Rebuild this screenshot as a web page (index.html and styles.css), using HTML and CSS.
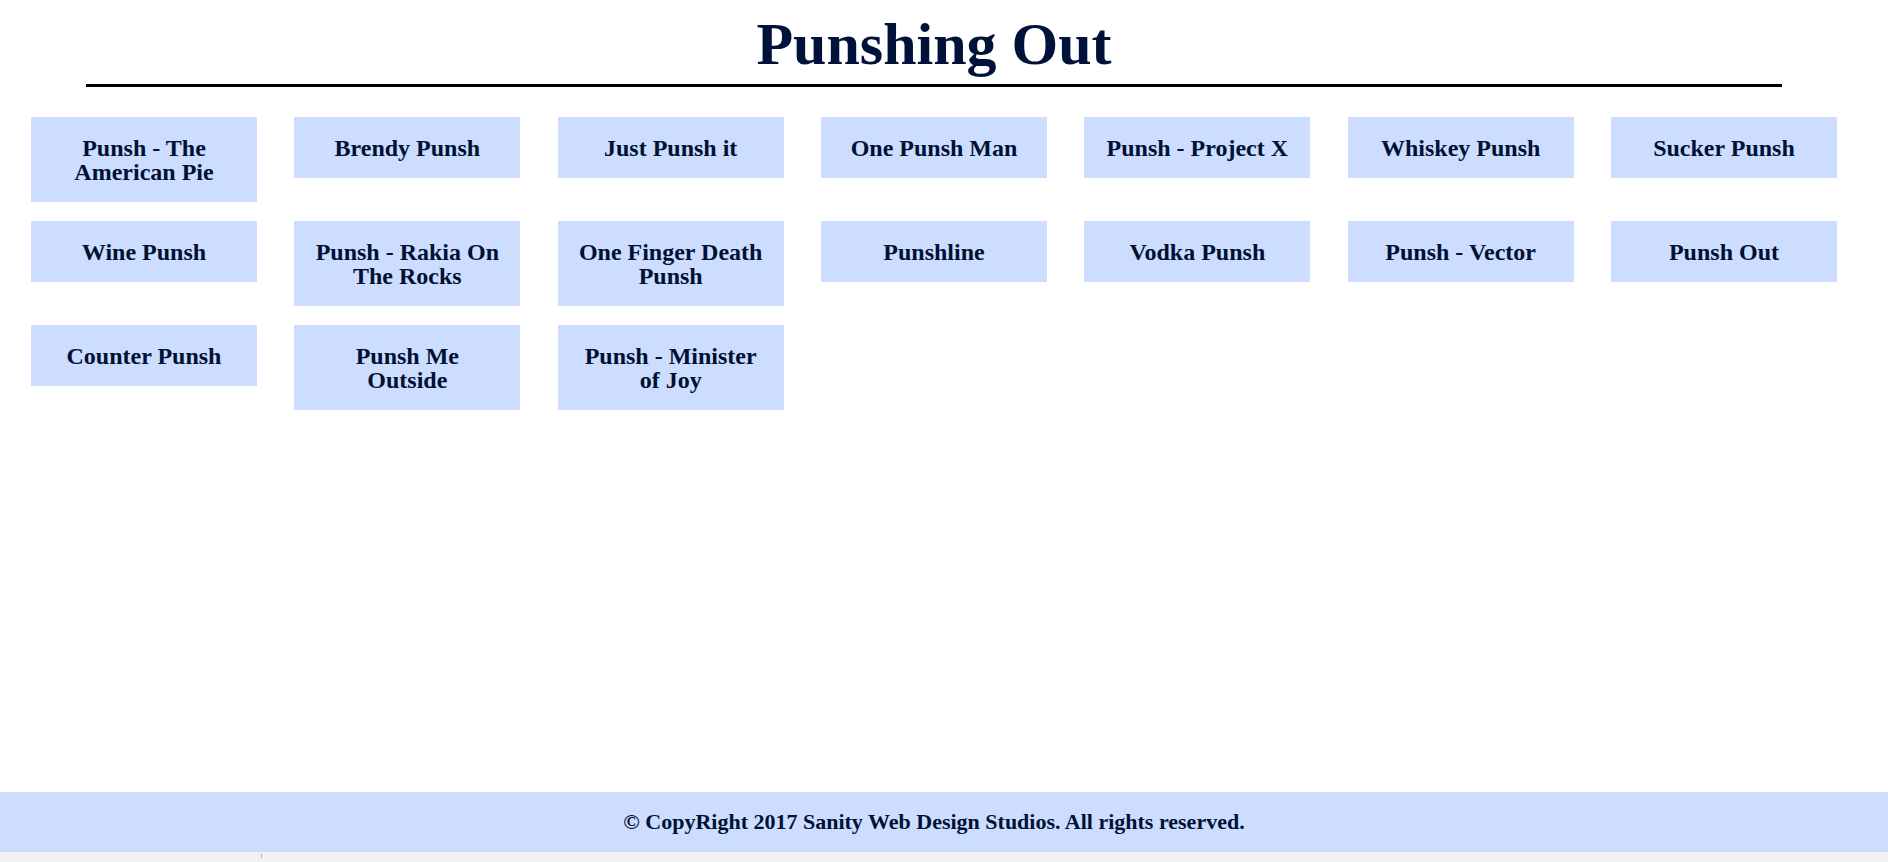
FILE: index.html
```html
<!DOCTYPE html>
<html lang="en">
<head>
<meta charset="utf-8">
<title>Punshing Out</title>
<link rel="stylesheet" href="styles.css">
</head>
<body>
<div class="page">
  <header class="header">
    <h1 class="title">Punshing Out</h1>
    <div class="rule"></div>
  </header>
  <main class="grid">
    <a class="card">Punsh - The American Pie</a>
    <a class="card">Brendy Punsh</a>
    <a class="card">Just Punsh it</a>
    <a class="card">One Punsh Man</a>
    <a class="card">Punsh - Project X</a>
    <a class="card">Whiskey Punsh</a>
    <a class="card">Sucker Punsh</a>
    <a class="card">Wine Punsh</a>
    <a class="card">Punsh - Rakia On The Rocks</a>
    <a class="card">One Finger Death Punsh</a>
    <a class="card">Punshline</a>
    <a class="card">Vodka Punsh</a>
    <a class="card">Punsh - Vector</a>
    <a class="card">Punsh Out</a>
    <a class="card">Counter Punsh</a>
    <a class="card">Punsh Me Outside</a>
    <a class="card">Punsh - Minister of Joy</a>
  </main>
</div>
<footer class="footer">
  <p class="footer-text">&copy; CopyRight 2017 Sanity Web Design Studios. All rights reserved.</p>
</footer>
<div class="statusbar"><span class="tick"></span></div>
</body>
</html>
```
FILE: styles.css
```css
html, body {
  margin: 0;
  padding: 0;
}
body {
  min-height: 862px;
  display: flex;
  flex-direction: column;
  background: #ffffff;
  font-family: "Liberation Serif", "Times New Roman", serif;
  color: #001133;
}
.page {
  flex: 1;
  width: 1868px;
}
.header {
  display: flex;
  flex-direction: column;
  align-items: center;
  padding-top: 14px;
}
.title {
  margin: 0;
  font-size: 60px;
  line-height: 60px;
  font-weight: bold;
  color: #00123a;
}
.rule {
  margin-top: 10px;
  width: 1696px;
  height: 3px;
  background: #000000;
}
.grid {
  display: flex;
  flex-wrap: wrap;
  align-items: flex-start;
  column-gap: 37.33px;
  row-gap: 19px;
  margin: 30px 0 0 31px;
  width: 1810px;
}
.card {
  box-sizing: border-box;
  width: 226px;
  padding: 19px 20px 18px;
  background: #ccddff;
  font-size: 24px;
  line-height: 24px;
  font-weight: bold;
  text-align: center;
  color: #001133;
}
.footer {
  height: 59px;
  border-bottom: 1px solid #d6d9de;
  background: #ccddff;
  display: flex;
  align-items: center;
  justify-content: center;
  padding-right: 20px;
}
.footer-text {
  margin: 0;
  font-size: 22px;
  line-height: 22px;
  font-weight: bold;
  color: #001133;
}
.statusbar {
  height: 10px;
  background: #f1f1f1;
  display: flex;
  padding-left: 261px;
}
.tick {
  width: 1px;
  height: 4px;
  margin-top: 2px;
  background: #b0b0b0;
}
```
